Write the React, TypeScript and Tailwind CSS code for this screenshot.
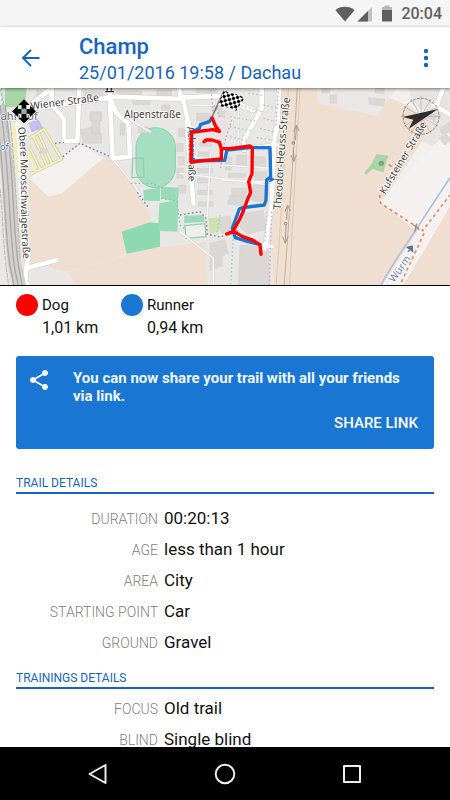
interface Detail {
  label: string;
  value: string;
}

interface Track {
  name: string;
  distance: string;
  dotClass: string;
}

const tracks: Track[] = [
  { name: "Dog", distance: "1,01 km", dotClass: "bg-[#ff0000]" },
  { name: "Runner", distance: "0,94 km", dotClass: "bg-[#1976d2]" },
];

const trailDetails: Detail[] = [
  { label: "DURATION", value: "00:20:13" },
  { label: "AGE", value: "less than 1 hour" },
  { label: "AREA", value: "City" },
  { label: "STARTING POINT", value: "Car" },
  { label: "GROUND", value: "Gravel" },
];

const trainingDetails: Detail[] = [
  { label: "FOCUS", value: "Old trail" },
  { label: "BLIND", value: "Single blind" },
];

const StatusBar = () => (
  <div className="flex h-[27px] shrink-0 items-center justify-end bg-[#f5f5f5] px-2 text-[#5f5f5f]">
    <svg width="20" height="16" viewBox="0 0 20 16" fill="currentColor" className="mr-[2px]">
      <path d="M0.5 4.2C3 1.8 6.3 0.8 10 0.8s7 1 9.500 3.400L10 15.500z" />
    </svg>
    <svg width="16" height="16" viewBox="0 0 16 16" fill="currentColor" className="mr-2">
      <path d="M15 1v14.500H0.500z" opacity="0.35" />
      <path d="M11 5v10.500H0.500z" />
    </svg>
    <svg width="12" height="17" viewBox="0 0 12 17" fill="currentColor" className="mr-2">
      <path d="M1 2h2.500V0.500h5V2H11v4H1z" opacity="0.4" />
      <path d="M1 5h10v11.500H1z" />
    </svg>
    <span className="text-base leading-5 font-medium">20:04</span>
  </div>
);

const Toolbar = () => (
  <header className="z-10 flex h-[61px] shrink-0 items-center bg-white px-4 text-[#1565c0] shadow-[0_1px_3px_rgba(0,0,0,0.5)]">
    <button type="button" aria-label="Back" className="flex w-[63px] shrink-0 items-center pl-1">
      <svg width="22" height="22" viewBox="0 0 22 22" fill="none" stroke="currentColor" strokeWidth="1.9">
        <path d="M19.500 11H3M11 3l-8 8 8 8" />
      </svg>
    </button>
    <div className="min-w-0 flex-1 pt-[2px]">
      <h1 className="text-[22px] leading-7 font-medium">Champ</h1>
      <p className="text-lg leading-6">25/01/2016 19:58 / Dachau</p>
    </div>
    <button type="button" aria-label="More options" className="flex w-4 justify-center">
      <svg width="6" height="20" viewBox="0 0 6 20" fill="currentColor">
        <circle cx="3" cy="3" r="2.200" />
        <circle cx="3" cy="10" r="2.200" />
        <circle cx="3" cy="17" r="2.200" />
      </svg>
    </button>
  </header>
);

const mainRoads = [
  "M60 85C75 68 115 45 155 8",
  "M90 72L330 38L350 85L385 115L390 215L338 220L328 8",
  "M155 8V58L192 102V168H232L238 8",
  "M330 35L548 42L566 112L570 160",
  "M540 38L690 32M538 8L542 38",
  "M560 110L580 355",
  "M785 8V70L770 98L732 165V195M700 52L760 75",
  "M838 8L832 120L822 170L815 360L795 490",
  "M760 190L830 180M790 480L815 483",
  "M1300 60L1350 88M1310 62L1330 8",
  "M85 500L75 590L88 606M78 550L170 525",
];

const minorRoads = [
  "M392 105L450 140M338 222L410 310L430 350",
  "M540 265L810 300M632 200L620 420M665 240L820 250M665 285L810 292",
  "M570 60L690 62M715 60V190M755 200L745 370",
  "M540 440L640 520V600",
  "M120 8L210 60M100 70L160 70",
];

const buildings = [
  "M350 18h75v18h-70zM250 20h60v20h-55zM110 15h35l-10 22-25 5z",
  "M395 45h55v14h-50zM470 15h45v18h-45zM590 10h60v14h-60z",
  "M270 80h35v28h-35zM240 135l35-10v20h30v30h-55zM275 85h25v60h-25z",
  "M360 115h15v35h-15zM415 125h30v18h-30zM440 80h20v10h-20z",
  "M485 60h25v22h-25zM590 85h38v24h-38zM635 60h30v15h-30zM655 78h20v18h-20z",
  "M535 130h20v25h-20zM530 175h20v25h-20zM535 215h18v24h-18zM530 250h20v30h-20zM535 300h22v25h-22z",
  "M600 170h35v14h-35zM595 200h35v14h-35zM592 250h45v14h-45zM592 280h40v14h-40zM592 315h45v14h-45zM595 350h45v14h-45z",
  "M675 215h20v40h-20zM710 210h30v30h-30zM765 215h32v32h-32zM685 265h52v12h-52zM695 310h45v45h-45zM765 260h35v25h-35z",
  "M755 300h45v45h-45zM690 330l60 10-8 25-60-8zM735 385l55-10 8 60-55 12-25-20zM760 335h34v14h-34z",
  "M630 475l45-12 10 42-20 8 2 30-38 15zM720 480l85 5 5 115h-95zM655 400l35-8 10 48-35 6z",
  "M1105 38l50 4-3 22-45-6zM1125 8l28 2-2 16-26-3zM990 30h20v25h-20zM965 10h25v14h-25z",
  "M1320 130l30-18v30l-24 6zM1318 160l20-15 15 20-20 15zM1290 80l22 10-8 20-22-10z",
  "M0 125l15 2v35l-15 3zM0 205h15v30H0zM120 190h20v15h-20z",
];

// Dotted garden borders between the houses
const gardenRows = [
  "M700 55L785 80M690 95L765 108M690 125L755 138M690 155L742 168",
  "M790 100L825 110M780 130L820 140M770 158L820 165M790 60L830 68M745 25L785 30",
];

const Map = () => (
  <svg
    role="img"
    aria-label="Trail map"
    viewBox="0 9 1350 591"
    preserveAspectRatio="xMidYMid slice"
    className="h-[198px] w-full shrink-0 border-b border-black bg-[#ece9e6]"
    fontFamily="'Noto Sans', 'Open Sans', sans-serif"
  >
    <rect width="1350" height="610" fill="#e9e7e5" />

    {/* fields */}
    <path d="M85 278L145 335L185 325L310 220L335 222L412 315L450 390V420L365 440L380 505L350 518L205 560L88 535z" fill="#f0dfd0" />
    <path d="M205 562L450 490L618 470L622 610H230z" fill="#f0dfd0" />
    <path d="M838 8H1350V610H820L815 470z" fill="#f0dfd0" />
    <path d="M88 278L145 335L185 325L310 220L240 178L180 215z" fill="#f2f1f0" />
    <path d="M950 8H1190L1165 48L1140 95L955 55z" fill="#eae8e6" />
    <path d="M1190 8H1350V355L1250 440L1140 350L1300 120L1225 62L1170 40z" fill="#f2efee" />
    <path d="M1225 8H1350V215L1260 165L1310 90L1240 62z" fill="#e7e4e2" />
    <path d="M1130 95L1165 45L1225 62L1290 130L1150 345L1090 330z" fill="#f0dfd0" />
    <path d="M1140 350L1350 130V370L1205 610H1140L1255 435z" fill="#f4f1f0" />
    <path d="M1350 365V610H1205z" fill="#f0dfd0" />
    <path d="M650 85L692 75L672 190L650 188z" fill="#eddfe3" />

    {/* greens and sports grounds */}
    <path d="M15 8H80L75 62L15 68z" fill="#a9d5a6" />
    <path d="M365 440L450 412L480 415V485L380 507z" fill="#8fd9b2" />
    <rect x="408" y="128" width="118" height="180" rx="59" fill="#a5dec0" stroke="#8acfae" strokeWidth="3" />
    <path d="M398 220L430 218L432 276L396 278z" fill="none" stroke="#92d0b5" strokeWidth="4" />
    <path d="M430 315L480 308V348L432 347zM483 305L540 308L532 350L483 340zM478 355L535 345L532 440L474 438z" fill="#99dbb7" />
    <path d="M553 392L610 390L615 410L552 415z" fill="#99dbb7" />
    <path d="M555 422L615 416L618 455L558 460z" fill="#eeeeec" stroke="#93cdb6" strokeWidth="4" />
    <path d="M625 400L675 395L665 435L630 448z" fill="#c8e2b4" />
    <path d="M1130 207L1165 212L1150 262L1118 252L1098 270L1093 262L1112 240z" fill="#abd3a8" />
    <circle cx="1144" cy="235" r="8" fill="#7da184" />
    <path d="M1130 8h20v7h-20z" fill="#b0d6ab" />

    {/* car park by the station */}
    <path d="M85 115L115 102L130 130L95 142z" fill="#c3bfea" />
    <path d="M35 115L60 112L80 270L45 272z" fill="#f3ecc0" />
    <path d="M85 155L135 128L195 225L100 268z" fill="#e8e5dc" />
    <g fill="none" stroke="#c9c5a0" strokeWidth="9" strokeLinejoin="round">
      <path d="M88 160L132 132L185 222L95 265M100 155L140 240M116 145L155 235M88 185L120 250" />
    </g>
    <g fill="none" stroke="#f5efb8" strokeWidth="6" strokeLinejoin="round">
      <path d="M88 160L132 132L185 222L95 265M100 155L140 240M116 145L155 235M88 185L120 250" />
      <path d="M38 125L58 255M50 115L85 270M85 200L105 260" />
    </g>

    <g fill="#dad7d4" stroke="#cfccc9" strokeWidth="1">
      {buildings.map((d) => (
        <path key={d} d={d} />
      ))}
    </g>

    <g fill="none" strokeLinejoin="round" strokeLinecap="round">
      {minorRoads.map((d) => (
        <path key={d} d={d} stroke="#d0cecb" strokeWidth="7" />
      ))}
      {minorRoads.map((d) => (
        <path key={d} d={d} stroke="#f6f5f4" strokeWidth="5" />
      ))}
      {mainRoads.map((d) => (
        <path key={d} d={d} stroke="#cfccc9" strokeWidth="17" />
      ))}
      {mainRoads.map((d) => (
        <path key={d} d={d} stroke="#ffffff" strokeWidth="14" />
      ))}
      <path d="M55 120C68 220 62 350 76 500" stroke="#ffffff" strokeWidth="18" />
    </g>

    {/* railway */}
    <g fill="none">
      <path d="M-4 60C20 180 28 320 36 450S48 540 60 610" stroke="#d2d0ce" strokeWidth="40" />
      <path d="M-12 80C6 180 10 320 20 450S34 540 42 610M0 60C20 180 25 320 34 450S45 540 56 610M15 60C34 180 36 320 46 450S57 540 68 610" stroke="#aaa8a6" strokeWidth="4" />
      <path d="M0 310C10 400 8 500 28 610M27 90C42 180 45 320 57 450L60 520" stroke="#b8b6b4" strokeWidth="3" strokeDasharray="14 3" />
      <path d="M5 8L20 130L46 295" stroke="#b4c4d8" strokeWidth="4" strokeDasharray="8 5" />
      <path d="M2 12L14 90" stroke="#a3cfc5" strokeWidth="5" strokeDasharray="8 6" />
    </g>

    {/* road east of the housing area */}
    <g fill="none">
      <path d="M865 8L860 120L845 360L828 610" stroke="#d9c6b2" strokeWidth="3" />
      <path d="M892 8L872 330L852 610" stroke="#c3b09d" strokeWidth="3" />
      <path d="M900 8L882 330L868 610" stroke="#cbbbaa" strokeWidth="2" />
      <path d="M881 140l8-20 8 18M873 210l8 20 8-20M855 380l8-20 8 18M848 455l8 20 8-20M880 190l2 38M862 365l-2 40M858 420l-2 50M890 120l-4 45" stroke="#a39b93" strokeWidth="3" />
      <circle cx="880" cy="174" r="4" stroke="#8e8780" strokeWidth="3" />
      <circle cx="857" cy="416" r="4" stroke="#8e8780" strokeWidth="3" />
    </g>

    {/* footpaths */}
    <g fill="none" strokeWidth="4" strokeDasharray="5 7">
      <path d="M165 175L192 172M188 215L240 175L330 215M412 322L445 368" stroke="#7874bd" />
      <path d="M540 390L600 380L618 400L622 448L660 456L720 435" stroke="#8983ad" />
      <path d="M392 295H455L490 310M483 340L530 348L540 420L558 435" stroke="#86c6b5" />
      <path d="M695 105L668 190L662 250M835 8L828 120M815 380L808 610" stroke="#c7a1d8" />
      <path d="M700 450L692 600M660 390L650 450M800 380L795 470" stroke="#9ccfbd" />
      <path d="M640 80L632 8M642 60L660 95" stroke="#c5a5d0" />
      {gardenRows.map((d) => (
        <path key={d} d={d} stroke="#a3d2be" />
      ))}
    </g>
    <g fill="none" stroke="#df8b62" strokeWidth="5" strokeDasharray="9 10">
      <path d="M1139 330L1142 355L1245 422L1268 437L1285 415L1350 330" />
      <path d="M1272 445L1200 600" />
    </g>
    <path d="M1140 606C1185 520 1240 450 1270 400L1350 278" fill="none" stroke="#aebfdc" strokeWidth="5" />
    <path d="M1240 420l18 14M1250 416l-6 24" stroke="#a88a77" strokeWidth="4" />
    <path d="M1166 238l9 7" stroke="#e08080" strokeWidth="5" />

    {/* labels */}
    <defs>
      <path id="obere" d="M53 128C70 220 56 340 70 530" />
      <path id="wiener" d="M93 74L310 46" />
      <path id="acker" d="M560 126C570 180 564 230 566 306" />
      <path id="theodor" d="M842 375C852 280 850 180 872 30" />
      <path id="kufsteiner" d="M1155 329L1290 104" />
      <path id="wuerm" d="M1182 594L1255 490" />
    </defs>
    <g fill="#3f3d3c" fontSize="27" stroke="#ffffff" strokeWidth="5" paintOrder="stroke" strokeLinejoin="round">
      <text x="2" y="106" fontSize="33" strokeWidth="3" fill="#6d6674">ahnhof</text>
      <text x="0" y="196" strokeWidth="3" fill="#4a789f">of</text>
      <text fontSize="31"><textPath href="#wiener">Wiener Straße</textPath></text>
      <text x="372" y="100" fontSize="30">Alpenstraße</text>
      <text fontSize="30"><textPath href="#obere">Obere Moosschwaigestraße</textPath></text>
      <text fontSize="29"><textPath href="#acker">Ackerstraße</textPath></text>
      <text fontSize="32"><textPath href="#theodor">Theodor-Heuss-Straße</textPath></text>
      <text fontSize="30"><textPath href="#kufsteiner">Kufsteiner Straße</textPath></text>
      <text fontSize="31" fill="#71839d"><textPath href="#wuerm">Würm</textPath></text>
    </g>
    <path d="M1224 501l8-12M1222 487l14-4 2 16z" stroke="#5c708b" strokeWidth="4" fill="#5c708b" />
    <path d="M316 20h26M322 9v8M334 9v8" stroke="#333333" strokeWidth="4" />

    {/* recorded tracks */}
    <g fill="none" strokeLinejoin="round" strokeLinecap="round">
      <path
        d="M635 100L628 110L602 118L598 130L575 142L574 228L674 226L681 195L750 188L810 188L812 275L800 285L798 345L793 360L728 368L718 372L697 430L706 458L745 470L780 478"
        stroke="#1b74cf"
        strokeWidth="10"
      />
      <path d="M812 278l10 5-12 6z" fill="#1b74cf" stroke="#1b74cf" strokeWidth="4" />
      <path
        d="M636 98L646 122L658 139L638 134L574 142L573 232L608 227L664 222V192L658 172L636 165L618 165L612 170M658 172L664 191L690 191L750 183L757 190L756 266L746 290L752 322L742 345L730 378L718 405L698 440L680 447L702 440L728 455L760 466L780 480L783 508"
        stroke="#ff0000"
        strokeWidth="10"
      />
    </g>

    {/* finish flag */}
    <defs>
      <pattern id="checker" width="18" height="18" patternUnits="userSpaceOnUse" patternTransform="rotate(30 670 20)">
        <rect width="18" height="18" fill="#ffffff" />
        <path d="M0 0h9v9H0zM9 9h9v9H9z" fill="#000000" />
      </pattern>
    </defs>
    <path d="M636 96L672 18" stroke="#777777" strokeWidth="5" />
    <path d="M673 15C695 32 710 20 733 40L708 78C688 62 680 72 653 60z" fill="url(#checker)" />

    {/* pan handle */}
    <path
      d="M72 43l17 17h-10v12h-14v-12H55zM72 115l-17-17h10V86h14v12h10zM36 79l18-17v10h12v14H54v10zM108 79l-18-17v10H78v14h12v10z"
      fill="#000000"
    />
    <rect x="64" y="71" width="16" height="16" fill="#91b1a5" />

    {/* compass */}
    <g fill="none" stroke="#5e5955" strokeWidth="2">
      <circle cx="1263" cy="94" r="54" strokeDasharray="9 3" />
      <path d="M1263 34V154M1203 94H1323M1233 42L1293 146M1211 124L1315 64M1293 42L1233 146M1211 64L1315 124" opacity="0.4" />
    </g>
    <path d="M1314 72L1226 132L1240 104L1208 96z" fill="#302f2f" />
  </svg>
);

const TrackLegend = () => (
  <ul className="flex px-4 pt-2">
    {tracks.map((track) => (
      <li key={track.name} className="flex w-[105px]">
        <span className={`mr-1 size-[22px] shrink-0 rounded-full ${track.dotClass}`} />
        <div className="leading-[22px]">
          <p className="text-[15px]">{track.name}</p>
          <p className="text-base">{track.distance}</p>
        </div>
      </li>
    ))}
  </ul>
);

const ShareCard = () => (
  <section className="mx-4 mt-4 flex rounded-[3px] bg-[#1976d2] pb-4 text-white">
    <svg width="24" height="24" viewBox="0 0 24 24" fill="currentColor" className="mt-3 ml-[11px] shrink-0">
      <path d="M18 16.080c-.76 0-1.440.3-1.960.77L8.910 12.700c.05-.23.090-.46.090-.7s-.04-.47-.09-.7l7.050-4.110c.54.5 1.250.81 2.040.81 1.660 0 3-1.340 3-3s-1.340-3-3-3-3 1.340-3 3c0 .24.040.47.090.7L8.040 9.810C7.500 9.310 6.790 9 6 9c-1.660 0-3 1.340-3 3s1.340 3 3 3c.79 0 1.500-.31 2.040-.81l7.120 4.160c-.05.21-.08.43-.08.65 0 1.610 1.310 2.920 2.920 2.920s2.920-1.310 2.920-2.920-1.310-2.920-2.920-2.920z" />
    </svg>
    <div className="flex flex-1 flex-col pt-[13px] pr-4 pl-[22px]">
      <p className="text-[15px] leading-[18px] font-bold text-blue-50">You can now share your trail with all your friends via link.</p>
      <button type="button" className="mt-2 self-end text-[15px] leading-5 font-medium">
        SHARE LINK
      </button>
    </div>
  </section>
);

interface DetailSectionProps {
  title: string;
  details: Detail[];
  listClass: string;
}

const DetailSection = ({ title, details, listClass }: DetailSectionProps) => (
  <section className="px-4">
    <h2 className="border-b-2 border-[#1565c0] text-xs leading-[18px] text-[#1565c0]">{title}</h2>
    <dl className={listClass}>
      {details.map((detail) => (
        <div key={detail.label} className="flex h-[31px] items-center gap-[6px]">
          <dt className="w-[142px] text-right text-sm font-light text-[#808080]">{detail.label}</dt>
          <dd className="text-[17px]">{detail.value}</dd>
        </div>
      ))}
    </dl>
  </section>
);

const NavigationBar = () => (
  <nav className="grid h-[53px] shrink-0 grid-cols-3 items-center bg-black px-[35px] text-[#eeeeee]">
    <button type="button" aria-label="Back" className="flex justify-center">
      <svg width="22" height="22" viewBox="0 0 22 22" fill="none" stroke="currentColor" strokeWidth="2" strokeLinejoin="round">
        <path d="M18.500 2v18L2.500 11z" />
      </svg>
    </button>
    <button type="button" aria-label="Home" className="flex justify-center">
      <svg width="22" height="22" viewBox="0 0 22 22" fill="none" stroke="currentColor" strokeWidth="2">
        <circle cx="11" cy="11" r="9.300" />
      </svg>
    </button>
    <button type="button" aria-label="Recent apps" className="flex justify-center">
      <svg width="22" height="22" viewBox="0 0 22 22" fill="none" stroke="currentColor" strokeWidth="2" strokeLinejoin="round">
        <path d="M3 3h16v16H3z" />
      </svg>
    </button>
  </nav>
);

const App = () => {
  return (
    <div className="flex h-screen flex-col overflow-hidden bg-white font-['Roboto',sans-serif] text-[#111111]">
      <StatusBar />
      <Toolbar />
      <Map />
      <main className="min-h-0 flex-1 overflow-hidden">
        <TrackLegend />
        <ShareCard />
        <div className="flex flex-col gap-[11px] pt-[25px]">
          <DetailSection title="TRAIL DETAILS" details={trailDetails} listClass="pt-[9px]" />
          <DetailSection title="TRAININGS DETAILS" details={trainingDetails} listClass="pt-1" />
        </div>
      </main>
      <NavigationBar />
    </div>
  );
};

export default App;
